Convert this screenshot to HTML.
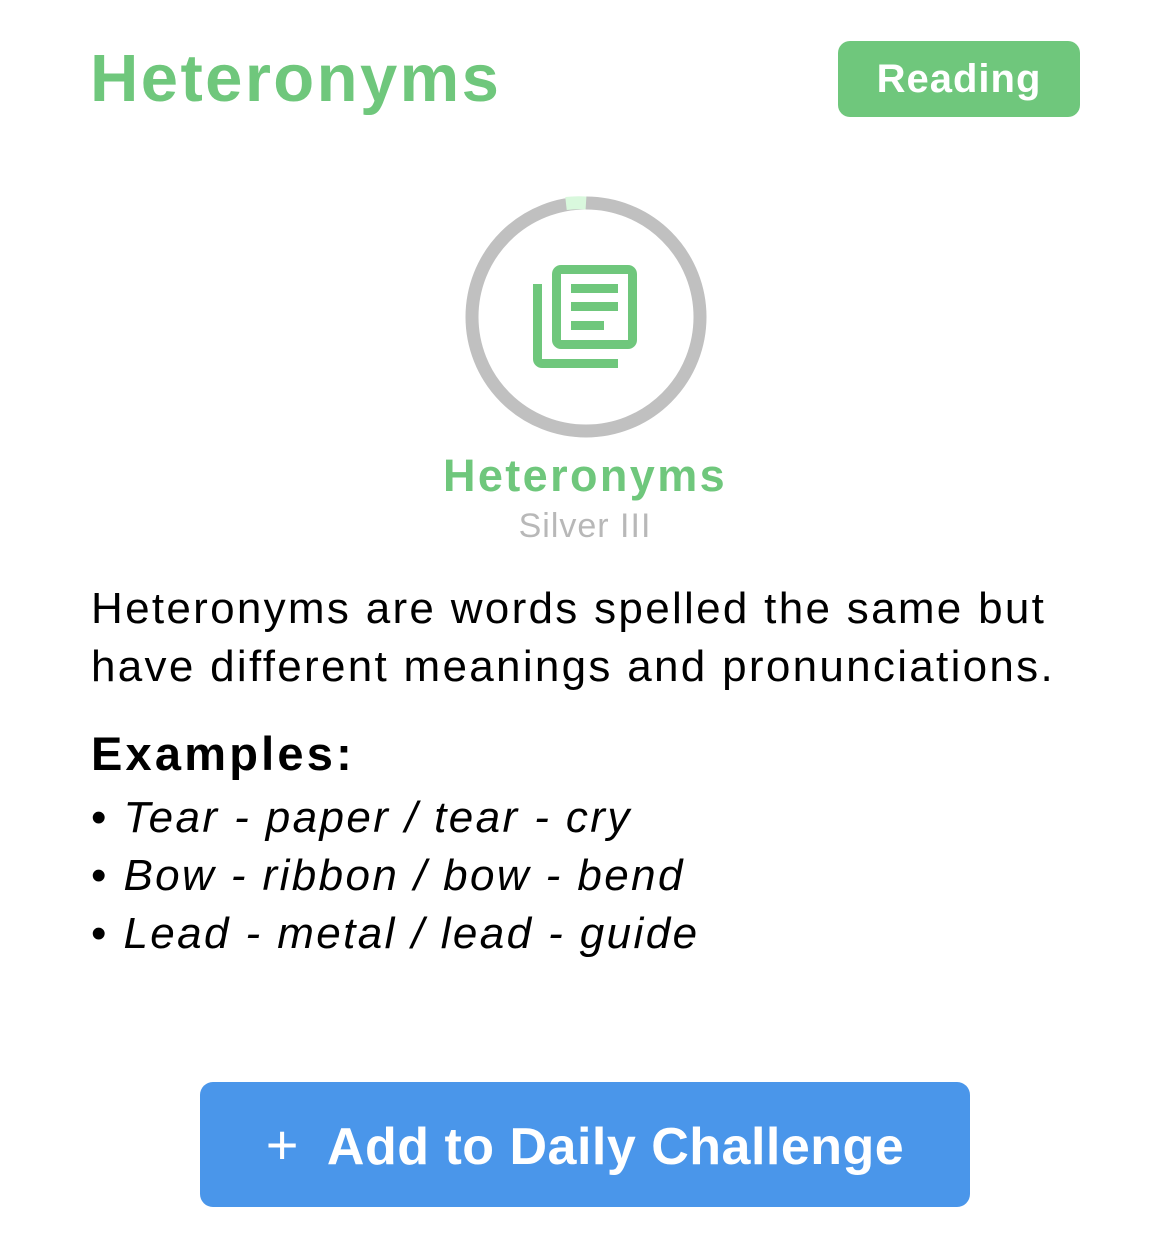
<!DOCTYPE html>
<html><head><meta charset="utf-8"><style>
body{margin:0;width:1170px;height:1239px;background:#fff;font-family:"Liberation Sans",sans-serif;position:relative;overflow:hidden}
.a{position:absolute;white-space:nowrap}
</style></head><body>
<div class="a" style="left:90px;top:40px;font-size:67px;font-weight:bold;color:#6fc77c;letter-spacing:2.4px">Heteronyms</div>
<div class="a" style="left:838px;top:41px;width:242px;height:76px;background:#6fc77c;border-radius:12px;color:#fff;font-weight:bold;font-size:40px;line-height:76px;text-align:center;letter-spacing:1px">Reading</div>
<svg class="a" style="left:0;top:0" width="1170" height="460">
<circle cx="586" cy="317" r="114" fill="none" stroke="#c0c0c0" stroke-width="13"/>
<path d="M566 203.5 A114 114 0 0 1 586 203" fill="none" stroke="#d9f8dd" stroke-width="13"/>
<g fill="#6fc77c">
<path d="M561 265 h67 a9 9 0 0 1 9 9 v66 a9 9 0 0 1 -9 9 h-67 a9 9 0 0 1 -9 -9 v-66 a9 9 0 0 1 9 -9z M561 274 v66 h67 v-66z" fill-rule="evenodd"/>
<path d="M533 284 h9 v75 h76 v9 h-76 a9 9 0 0 1 -9 -9z"/>
<rect x="571" y="284" width="47" height="9"/>
<rect x="571" y="302" width="47" height="9"/>
<rect x="571" y="321" width="33" height="9"/>
</g>
</svg>
<div class="a" style="left:0;width:1170px;text-align:center;top:450px;font-size:45px;font-weight:bold;color:#6fc77c;letter-spacing:2.4px">Heteronyms</div>
<div class="a" style="left:0;width:1170px;text-align:center;top:507px;font-size:34px;color:#b8b8b8;letter-spacing:1px">Silver III</div>
<div class="a" style="left:91px;top:580px;font-size:44px;line-height:58px;color:#000;letter-spacing:2.3px">Heteronyms are words spelled the same but<br>have different meanings and pronunciations.</div>
<div class="a" style="left:91px;top:726px;font-size:47px;font-weight:bold;color:#000;letter-spacing:3.2px">Examples:</div>
<div class="a" style="left:91px;top:789px;font-size:44px;line-height:58px;color:#000;letter-spacing:2.4px">• <i>Tear - paper / tear - cry</i><br>• <i>Bow - ribbon / bow - bend</i><br>• <i>Lead - metal / lead - guide</i></div>
<div class="a" style="left:200px;top:1082px;width:770px;height:125px;background:#4a96ea;border-radius:13px;color:#fff;font-weight:bold;font-size:52px;line-height:125px;text-align:center;letter-spacing:0.5px"><span style="font-weight:normal;font-size:56px">+</span>&nbsp; Add to Daily Challenge</div>
</body></html>
